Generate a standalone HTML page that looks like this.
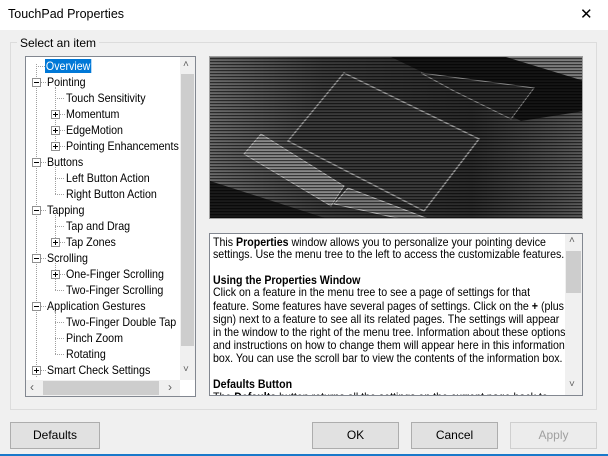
<!DOCTYPE html>
<html><head><style>
*{margin:0;padding:0;box-sizing:border-box}
body{width:608px;height:456px;background:#f0f0f0;font-family:"Liberation Sans",sans-serif;font-size:12px;position:relative;overflow:hidden;color:#000}
.abs{position:absolute}
.title{left:0;top:0;width:608px;height:30px;background:#fff}
.ttl{position:absolute;left:8px;top:7px;font-size:12.5px}
.close{position:absolute;left:580px;top:5px;font-size:15px}
.group{left:10px;top:42px;width:587px;height:368px;border:1px solid #dcdcdc}
.legend{left:17px;top:36px;background:#f0f0f0;padding:0 3px}
.tree{left:25px;top:56px;width:171px;height:341px;background:#fff;border:1px solid #828790;overflow:hidden}
.vs{left:180px;top:57px;width:15px;height:323px;background:#f0f0f0}
.vthumb{left:181px;top:74px;width:13px;height:272px;background:#cdcdcd}
.hs{left:26px;top:380px;width:154px;height:16px;background:#f0f0f0}
.hthumb{left:43px;top:381px;width:116px;height:14px;background:#cdcdcd}
.it{position:absolute;white-space:nowrap;line-height:15px;height:15px;transform:scaleX(.89);transform-origin:0 0}
.sel{background:#0078d7;color:#fff;padding:0 1px}
.box{position:absolute;width:9px;height:9px;border:1px solid #919191;background:#fff}
.box::before{content:"";position:absolute;left:1px;top:3px;width:5px;height:1px;background:#000}
.box.p::after{content:"";position:absolute;left:3px;top:1px;width:1px;height:5px;background:#000}
.dv{position:absolute;width:0;border-left:1px dotted #a0a0a0}
.dh{position:absolute;height:0;border-top:1px dotted #a0a0a0}
.img{left:209px;top:56px;width:374px;height:163px;border:1px solid #a0a0a0;background:#222;overflow:hidden}
.txt{left:209px;top:233px;width:374px;height:163px;border:1px solid #828790;background:#fff;overflow:hidden}
.ln{position:absolute;left:3px;white-space:nowrap;line-height:13px;font-size:12px;transform:scaleX(.885);transform-origin:0 0}
.tvs{left:565px;top:234px;width:17px;height:161px;background:#f0f0f0}
.tthumb{left:566px;top:251px;width:15px;height:42px;background:#cdcdcd}
.btn{position:absolute;top:422px;height:27px;border:1px solid #adadad;background:#e1e1e1;text-align:center;line-height:25px}
</style></head><body>
<div class="abs title"><span class="ttl">TouchPad Properties</span><span class="close">✕</span></div>
<div class="abs group"></div>
<div class="abs legend">Select an item</div>
<div class="abs tree">
<div class="dv" style="left:10px;top:7px;height:313px"></div>
<div class="dh" style="left:10px;top:9px;width:9px"></div>
<div class="it" style="left:19px;top:2px"><span class="sel">Overview</span></div>
<div class="box" style="left:6px;top:21px"></div><div class="dh" style="left:15px;top:25px;width:5px"></div>
<div class="it" style="left:21px;top:18px">Pointing</div>
<div class="dv" style="left:29px;top:30px;height:58px"></div>
<div class="dh" style="left:29px;top:41px;width:9px"></div><div class="it" style="left:40px;top:34px">Touch Sensitivity</div>
<div class="box p" style="left:25px;top:53px"></div><div class="dh" style="left:34px;top:57px;width:5px"></div><div class="it" style="left:40px;top:50px">Momentum</div>
<div class="box p" style="left:25px;top:69px"></div><div class="dh" style="left:34px;top:73px;width:5px"></div><div class="it" style="left:40px;top:66px">EdgeMotion</div>
<div class="box p" style="left:25px;top:85px"></div><div class="dh" style="left:34px;top:89px;width:5px"></div><div class="it" style="left:40px;top:82px">Pointing Enhancements</div>
<div class="box" style="left:6px;top:101px"></div><div class="dh" style="left:15px;top:105px;width:5px"></div><div class="it" style="left:21px;top:98px">Buttons</div>
<div class="dv" style="left:29px;top:110px;height:27px"></div>
<div class="dh" style="left:29px;top:121px;width:9px"></div><div class="it" style="left:40px;top:114px">Left Button Action</div>
<div class="dh" style="left:29px;top:137px;width:9px"></div><div class="it" style="left:40px;top:130px">Right Button Action</div>
<div class="box" style="left:6px;top:149px"></div><div class="dh" style="left:15px;top:153px;width:5px"></div><div class="it" style="left:21px;top:146px">Tapping</div>
<div class="dv" style="left:29px;top:158px;height:27px"></div>
<div class="dh" style="left:29px;top:169px;width:9px"></div><div class="it" style="left:40px;top:162px">Tap and Drag</div>
<div class="box p" style="left:25px;top:181px"></div><div class="dh" style="left:34px;top:185px;width:5px"></div><div class="it" style="left:40px;top:178px">Tap Zones</div>
<div class="box" style="left:6px;top:197px"></div><div class="dh" style="left:15px;top:201px;width:5px"></div><div class="it" style="left:21px;top:194px">Scrolling</div>
<div class="dv" style="left:29px;top:206px;height:27px"></div>
<div class="box p" style="left:25px;top:213px"></div><div class="dh" style="left:34px;top:217px;width:5px"></div><div class="it" style="left:40px;top:210px">One-Finger Scrolling</div>
<div class="dh" style="left:29px;top:233px;width:9px"></div><div class="it" style="left:40px;top:226px">Two-Finger Scrolling</div>
<div class="box" style="left:6px;top:245px"></div><div class="dh" style="left:15px;top:249px;width:5px"></div><div class="it" style="left:21px;top:242px">Application Gestures</div>
<div class="dv" style="left:29px;top:254px;height:43px"></div>
<div class="dh" style="left:29px;top:265px;width:9px"></div><div class="it" style="left:40px;top:258px">Two-Finger Double Tap</div>
<div class="dh" style="left:29px;top:281px;width:9px"></div><div class="it" style="left:40px;top:274px">Pinch Zoom</div>
<div class="dh" style="left:29px;top:297px;width:9px"></div><div class="it" style="left:40px;top:290px">Rotating</div>
<div class="box p" style="left:6px;top:309px"></div><div class="dh" style="left:15px;top:313px;width:5px"></div><div class="it" style="left:21px;top:306px">Smart Check Settings</div>
</div>
<div class="abs vs"></div><div class="abs vthumb"></div>
<div class="abs" style="left:183px;top:59px;font-size:10px;color:#606060">˄</div>
<div class="abs" style="left:183px;top:364px;font-size:10px;color:#606060">˅</div>
<div class="abs hs"></div><div class="abs hthumb"></div>
<div class="abs" style="left:30px;top:380px;font-size:12px;color:#606060">‹</div>
<div class="abs" style="left:168px;top:380px;font-size:12px;color:#606060">›</div>
<div class="abs img">
<svg width="374" height="163" viewBox="209 56 374 163">
<defs>
<linearGradient id="g" x1="0" y1="0" x2="1" y2="0"><stop offset="0" stop-color="#6a6a6a"/><stop offset=".3" stop-color="#3a3a3a"/><stop offset=".7" stop-color="#2a2a2a"/><stop offset="1" stop-color="#5a5a5a"/></linearGradient>
<pattern id="st" x="0" y="0" width="4" height="3" patternUnits="userSpaceOnUse"><rect width="4" height="1.2" fill="#000" opacity=".6"/></pattern>
</defs>
<rect x="209" y="56" width="374" height="163" fill="url(#g)"/>
<polygon points="390,56 583,56 583,110 520,120 440,80" fill="#151515"/>
<polygon points="505,56 583,56 583,80" fill="#aaa" opacity=".7"/>
<polygon points="420,72 533,87 510,118 453,90" fill="#2a2a2a" stroke="#888"/>
<polygon points="343,72 478,138 423,210 287,140" fill="#3a3a3a" stroke="#9a9a9a" stroke-width="1.5"/>
<polygon points="209,180 330,219 209,219" fill="#1a1a1a"/>
<polygon points="243,153 260,133 343,185 330,205" fill="#888" stroke="#bbb"/>
<polygon points="333,203 347,187 430,219 405,219" fill="#777" stroke="#bbb"/>
<rect x="209" y="56" width="374" height="163" fill="url(#st)"/>
</svg>
</div>
<div class="abs txt">
<div class="ln" style="top:2px">This <b>Properties</b> window allows you to personalize your pointing device</div>
<div class="ln" style="top:14px">settings. Use the menu tree to the left to access the customizable features.</div>
<div class="ln" style="top:40px"><b>Using the Properties Window</b></div>
<div class="ln" style="top:52px">Click on a feature in the menu tree to see a page of settings for that</div>
<div class="ln" style="top:66px">feature. Some features have several pages of settings. Click on the <b>+</b> (plus</div>
<div class="ln" style="top:79px">sign) next to a feature to see all its related pages. The settings will appear</div>
<div class="ln" style="top:92px">in the window to the right of the menu tree. Information about these options</div>
<div class="ln" style="top:105px">and instructions on how to change them will appear here in this information</div>
<div class="ln" style="top:118px">box. You can use the scroll bar to view the contents of the information box.</div>
<div class="ln" style="top:144px"><b>Defaults Button</b></div>
<div class="ln" style="top:157px">The <b>Defaults</b> button returns all the settings on the current page back to</div>
</div>
<div class="abs tvs"></div><div class="abs tthumb"></div>
<div class="abs" style="left:569px;top:235px;font-size:10px;color:#606060">˄</div>
<div class="abs" style="left:569px;top:379px;font-size:10px;color:#606060">˅</div>
<div class="btn" style="left:10px;width:90px">Defaults</div>
<div class="btn" style="left:312px;width:87px">OK</div>
<div class="btn" style="left:411px;width:87px">Cancel</div>
<div class="btn" style="left:510px;width:87px;color:#a0a0a0;background:#ececec;border-color:#cfcfcf">Apply</div>
<div class="abs" style="left:0;top:454px;width:608px;height:2px;background:#1979ca"></div>
</body></html>
